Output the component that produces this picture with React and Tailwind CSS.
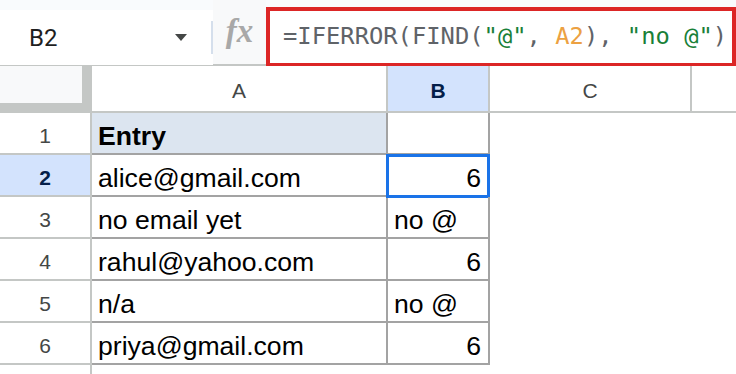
import React from 'react';

const rows = [
  { n: '1', a: 'Entry', b: '', head: true },
  { n: '2', a: 'alice@gmail.com', b: '6', num: true, selected: true },
  { n: '3', a: 'no email yet', b: 'no @' },
  { n: '4', a: 'rahul@yahoo.com', b: '6', num: true },
  { n: '5', a: 'n/a', b: 'no @' },
  { n: '6', a: 'priya@gmail.com', b: '6', num: true },
];

function FormulaBar() {
  return (
    <div className="flex h-[66px] border-b-2 border-[#c4c7c5] bg-[#f9fbfd]">
      <div className="mt-[10px] flex h-[55px] w-[213px] items-center bg-white pl-[29px]">
        <span className="text-[24px] text-[#1f1f1f]" style={{ fontFamily: 'Roboto, sans-serif' }}>B2</span>
        <svg className="ml-auto mr-[24px]" width="12" height="7" viewBox="0 0 12 7">
          <polygon points="0,0 12,0 6,7" fill="#444746" />
        </svg>
        <div className="h-[33px] w-[2px] bg-[#d5dfec]"></div>
      </div>
      <div className="flex w-[53px] items-center justify-center bg-[#f8f9fa] pb-[2px]">
        <span className="text-[33px] font-bold italic leading-none text-[#a8a8a8]" style={{ fontFamily: '"Liberation Serif", serif' }}>fx</span>
      </div>
      <div className="mt-[7px] flex h-[60px] flex-1 items-center border-4 border-[#dc2626] bg-white pl-[13px]">
        <span className="whitespace-pre text-[23.8px] text-[#5f6368]" style={{ fontFamily: '"DejaVu Sans Mono", monospace' }}>
          =IFERROR(FIND(<span className="text-[#188038]">"@"</span>, <span className="text-[#eca142]">A2</span>), <span className="text-[#188038]">"no @"</span>)
        </span>
      </div>
    </div>
  );
}

function ColumnHeaders() {
  return (
    <div className="flex h-[47px] border-b-2 border-[#c4c7c5] text-[21px] text-[#444746]">
      <div className="h-[47px] w-[92px] bg-[#c4c7c5]">
        <div className="h-[37px] w-[82px] bg-[#f8f9fa]"></div>
      </div>
      <div className="flex w-[296px] items-center justify-center border-r-2 border-[#c4c7c5] bg-white pt-[5px]">A</div>
      <div className="flex w-[102px] items-center justify-center border-r-2 border-[#c4c7c5] bg-[#d3e3fd] pt-[5px] font-bold text-[#041e49]">B</div>
      <div className="flex w-[202px] items-center justify-center border-r-2 border-[#c4c7c5] bg-white pt-[5px]">C</div>
      <div className="flex-1 bg-white"></div>
    </div>
  );
}

function Row({ row }) {
  return (
    <div className="flex h-[42px]">
      <div
        className={
          row.selected
            ? 'flex w-[92px] items-center justify-center border-r-2 border-b-2 border-[#c4c7c5] bg-[#d3e3fd] pt-[6px] text-[21px] font-bold text-[#041e49]'
            : 'flex w-[92px] items-center justify-center border-r-2 border-b-2 border-[#c4c7c5] pt-[6px] text-[21px] text-[#444746]'
        }
      >
        {row.n}
      </div>
      <div
        className={
          row.head
            ? 'flex w-[296px] items-center border-r-2 border-b-2 border-[#a3a3a3] bg-[#dce5f0] px-[6px] pt-[7px] font-bold'
            : 'flex w-[296px] items-center border-r-2 border-b-2 border-[#a3a3a3] px-[6px] pt-[7px]'
        }
      >
        {row.a}
      </div>
      <div
        className={
          row.num
            ? 'relative flex w-[102px] items-center justify-end border-r-2 border-b-2 border-[#a3a3a3] px-[7px] pt-[7px]'
            : 'relative flex w-[102px] items-center border-r-2 border-b-2 border-[#a3a3a3] px-[6px] pt-[7px]'
        }
      >
        {row.b}
        {row.selected && (
          <div className="absolute -left-[2px] -top-[1px] h-[44px] w-[104px] border-[3px] border-[#1a73e8]"></div>
        )}
      </div>
      <div className="flex-1"></div>
    </div>
  );
}

export default function App() {
  return (
    <div className="h-[374px] w-[736px] overflow-hidden bg-white text-black" style={{ fontFamily: '"Liberation Sans", Arial, sans-serif' }}>
      <FormulaBar />
      <ColumnHeaders />
      <div className="text-[26.6px]">
        {rows.map((r) => (
          <Row key={r.n} row={r} />
        ))}
      </div>
      <div className="h-[20px] w-[92px] border-r-2 border-[#c4c7c5]"></div>
    </div>
  );
}
